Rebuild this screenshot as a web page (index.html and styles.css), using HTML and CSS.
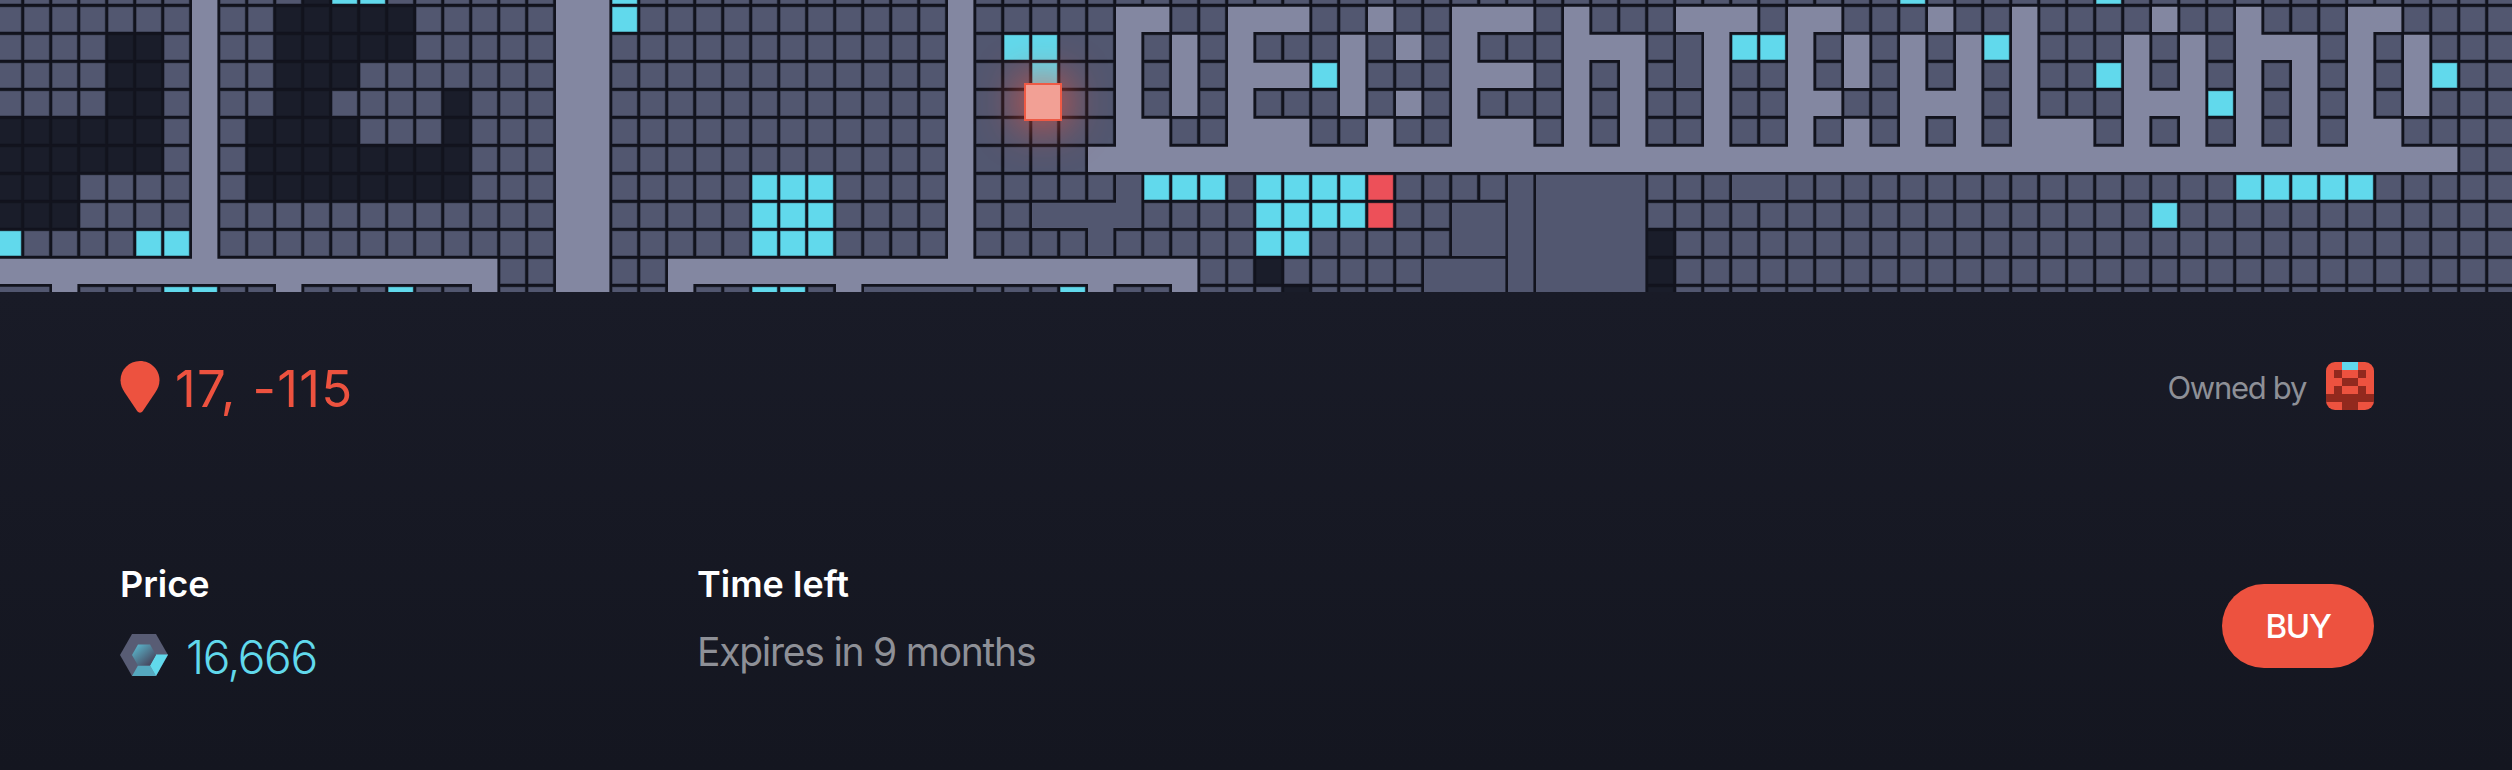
FILE: index.html
```html
<!DOCTYPE html>
<html lang="en">
<head>
<meta charset="utf-8">
<title>Parcel 17, -115</title>
<link rel="stylesheet" href="styles.css">
</head>
<body>
<div class="map">
  <svg class="map-grid" id="grid" width="2512" height="292" viewBox="0 0 2512 292"></svg>
  <div class="map-marker"></div>
</div>
<main class="parcel">
  <header class="parcel-head">
    <div class="coords">
      <svg class="pin" width="40" height="52" viewBox="0 0 40 52"><path d="M20 0C9 0 .5 8.600 .5 19.300c0 5 1.900 8.700 4.200 12.200L17.300 50.300c1.500 1.900 3.900 1.900 5.400 0L35.300 31.500c2.300-3.500 4.200-7.200 4.200-12.200C39.500 8.600 31 0 20 0z"/></svg>
      <span class="coords-text">17, -115</span>
    </div>
    <div class="owner">
      <span class="owner-label">Owned by</span>
      <svg class="avatar" width="48" height="48" viewBox="0 0 48 48" shape-rendering="crispEdges">
        <rect class="av-base" width="48" height="48"/>
        <path class="av-cyan" d="M16 0h16v8H16z"/>
        <path class="av-dark" d="M8 8h8v8H8zM32 8h8v8h-8zM16 16h16v8H16zM8 24h8v8H8zM32 24h8v8h-8zM0 32h48v8H0zM16 40h16v8H16z"/>
      </svg>
    </div>
  </header>
  <section class="parcel-body">
    <div class="col col-price">
      <h2 class="label">Price</h2>
      <div class="price">
        <svg class="token" width="48" height="42" viewBox="0 0 48 42">
          <defs>
            <linearGradient id="core" x1="0" y1="0" x2="1" y2="1"><stop offset=".1" stop-color="#5ab4ca"/><stop offset=".85" stop-color="#47475f"/></linearGradient>
          </defs>
          <path fill="#585c74" d="M12 0h24l12 21-12 21H12L0 21z"/>
          <path fill="#55a8bf" d="M18 31.500h12L36 42H12z"/>
          <path fill="#61d9ec" d="M36 20.500h12L36 42l-6-10.500z"/>
          <path fill="url(#core)" d="M18 10.500h12L36 21l-6 10.500H18L12 21z"/>
        </svg>
        <span class="price-value">16,666</span>
      </div>
    </div>
    <div class="col col-time">
      <h2 class="label">Time left</h2>
      <p class="expires">Expires in 9 months</p>
    </div>
    <button class="buy" type="button">BUY</button>
  </section>
</main>
<script src="map.js"></script>
</body>
</html>
```

FILE: styles.css
```css
* { box-sizing: border-box; }
body {
  margin: 0;
  width: 2512px;
  height: 770px;
  overflow: hidden;
  background: #14161f;
  font-family: Inter, "Liberation Sans", sans-serif;
}
.map { position: relative; height: 292px; overflow: hidden; background: #12131d; }
.map-grid { display: block; }
.cell-plot { fill: #525770; }
.cell-road { fill: #8387a1; }
.cell-dark { fill: #1a1d2a; }
.cell-sale { fill: #61d9ec; }
.cell-mine { fill: #ed5059; }
.edged { stroke: #12131d; stroke-opacity: .5; stroke-width: 1.2; }
.map-marker {
  position: absolute;
  left: 1024px;
  top: 83px;
  width: 38px;
  height: 38px;
  border: 2px solid #ee5a45;
  background: #f2a095;
  box-shadow: 0 0 42px 3px rgba(238, 82, 62, .9);
}
.parcel {
  height: 478px;
  padding: 69px 138px 0 120px;
  background: linear-gradient(#191b27, #141620);
}
.parcel-head { display: flex; justify-content: space-between; height: 52px; }
.coords { display: flex; align-items: center; gap: 15px; color: #ed523f; }
.pin { fill: #ed523f; }
.coords-text { padding-top: 3px; font-size: 51px; font-weight: 430; line-height: 54px; letter-spacing: 1.3px; }
.owner { display: flex; align-items: center; gap: 20px; height: 50px; }
.owner-label { padding-top: 2px; color: #8e9097; font-size: 31px; font-weight: 430; letter-spacing: -1.3px; }
.avatar { border-radius: 9px; }
.av-base { fill: #ed523f; }
.av-cyan { fill: #61d9ec; }
.av-dark { fill: #92291e; }
.parcel-body { display: flex; align-items: flex-start; margin-top: 149px; }
.col { display: flex; flex-direction: column; }
.col-price { width: 577px; }
.label { margin: 0; color: #fff; font-size: 36px; font-weight: 600; line-height: 44px; }
.price { display: flex; align-items: center; gap: 18px; margin-top: 20px; height: 56px; }
.token { margin-top: 2px; }
.price-value { padding-top: 5px; color: #61d9ec; font-size: 46px; font-weight: 280; letter-spacing: -1.4px; }
.expires { margin: 22px 0 0; color: #8e9097; font-size: 39px; font-weight: 430; line-height: 48px; letter-spacing: -1.25px; }
.buy {
  width: 152px;
  height: 84px;
  margin: 22px 0 0 auto;
  padding: 0;
  border: 0;
  border-radius: 42px;
  background: #ed523f;
  color: #fff;
  font: 500 33px Inter, "Liberation Sans", sans-serif;
  letter-spacing: -1.3px;
}
```

FILE: map.js
```js
// Parcel grid. Every cell is an ordinary plot unless a row lists it below.
// r road, k district, c for sale, e owned, A-Z merged estates.
var COLS = 90, PITCH = 28, SIZE = 25.4, LEFT = -4, TOP = -21.3;
var rows = [
  'k11 c12-13 c22 c68 c75',
  'k10-14 c22 r40-41 r44-46 r49 r52-54 r56 r60-62 r64-65 r69 r72 r77 r80 r84-85',
  'k4-5 k10-14 c36-37 r40 r42 r44 r48 r50 r52 r56-58 A60 r61 c62-63 r64 r66 r68 r70 c71 r72 r76 r78 r80-82 r84 r86',
  'k4-5 k10-12 c37 r40 r42 r44-46 c47 r48 r52-54 r56 r58 A60 r61 r64 r66 r68 r70 r72 c75 r76 r78 r80 r82 r84 r86 c87',
  'k4-5 k10-11 k16 r40 r42 r44 r48 r50 r52 r56 r58 r61 r64-65 r68-70 r72 r76-78 c79 r80 r82 r84 r86',
  'k0-5 k9-12 k16 r40-41 r44-46 r49 r52-54 r56 r58 r61 r64 r66 r68 r70 r72-74 r76 r78 r80 r82 r84-85',
  'k0-5 k9-16 r39-87',
  'k0-2 k9-16 c27-29 B40 c41-43 c45-48 e49 C54 D55-58 E62-63 c80-84',
  'k0-2 c27-29 B37-40 c45-48 e49 F52-53 C54 D55-58 c77',
  'c0 c5-6 c27-29 B39 c45-46 F52-53 C54 D55-58 k59',
  'r0-17 r24-42 k45 G51-53 C54 D55-58 k59',
  'H0-1 r2 c6-7 r10 c14 r17 r24 c27-28 r30 I31-34 c38 r39 r42 k46 G51-53 C54 D55-58 k59'
];
var names = { r: 'road', k: 'dark', c: 'sale', e: 'mine' };
var grid = rows.map(function (spec, y) {
  var line = new Array(COLS).fill('.');
  spec.split(' ').forEach(function (item) {
    var span = item.slice(1).split('-').map(Number);
    for (var x = span[0]; x <= (span[1] || span[0]); x++) line[x] = item[0];
  });
  // Long avenues that cross every block
  line[20] = line[21] = 'r';
  if (y < 11) line[7] = line[34] = 'r';
  return line;
});
var paths = {};
function at(x, y) { return grid[y] && grid[y][x]; }
grid.forEach(function (line, y) {
  line.forEach(function (type, x) {
    var estate = /[A-Z]/.test(type);
    var joins = type === 'r' || estate;
    var right = joins && (at(x + 1, y) === type);
    var below = joins && (at(x, y + 1) === type);
    var px = LEFT + x * PITCH, py = TOP + y * PITCH;
    var name = 'cell-' + (names[type] || 'plot') + (joins ? '' : ' edged');
    var d = 'M' + px + ' ' + py + 'h' + (right ? PITCH + .5 : SIZE) + 'v' + SIZE + 'H' + px + 'z';
    if (below) {
      var corner = right && at(x + 1, y + 1) === type;
      d += 'M' + px + ' ' + (py + SIZE - .5) + 'h' + (corner ? PITCH + .5 : SIZE) + 'v3.500H' + px + 'z';
    }
    paths[name] = (paths[name] || '') + d;
  });
});
document.getElementById('grid').innerHTML = Object.keys(paths).map(function (name) {
  return '<path class="' + name + '" d="' + paths[name] + '"/>';
}).join('');
```
